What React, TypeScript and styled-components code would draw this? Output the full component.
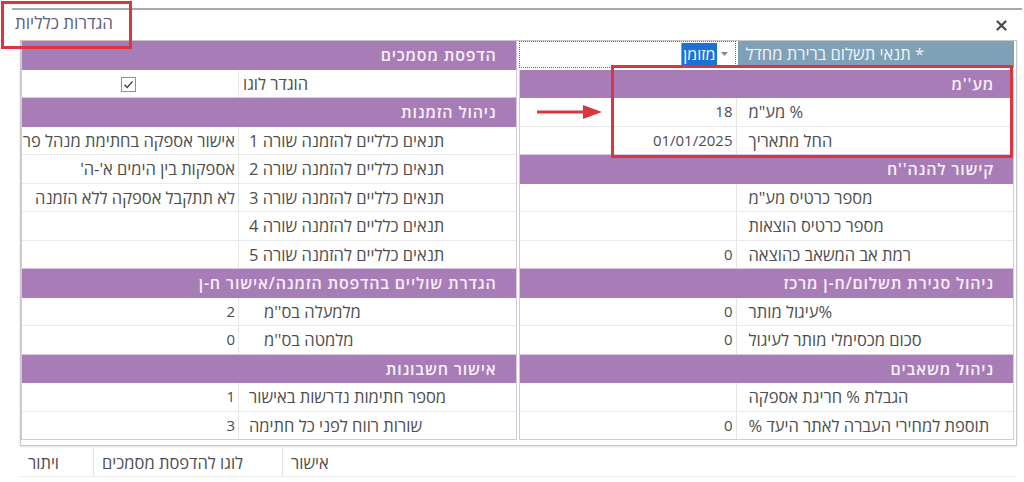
import React from "react";
import styled, { createGlobalStyle } from "styled-components";

const Global = createGlobalStyle`
  html, body { margin: 0; padding: 0; background: #ffffff; }
  body { font-family: "Open Sans", "DejaVu Sans", sans-serif; }
  * { box-sizing: border-box; }
`;

const Page = styled.div`
  position: relative;
  width: 1024px;
  height: 482px;
  overflow: hidden;
`;

const Dialog = styled.div`
  width: 1010px;
  margin: 8px 0 0 12px;
  border-top: 2px solid #a9a9a9;
`;

const TitleBar = styled.div`
  display: flex;
  justify-content: space-between;
  align-items: flex-start;
  height: 30px;
  padding: 0 15px 0 3px;
  direction: ltr;
`;

const Title = styled.div`
  font-size: 17px;
  line-height: 26px;
  color: #615d7b;
  direction: rtl;
`;

const CloseButton = styled.button`
  margin-top: 10px;
  width: 11px;
  height: 11px;
  padding: 0;
  border: 0;
  background: transparent;
  display: flex;
`;

const Panel = styled.div`
  margin-left: 8px;
  width: 997px;
  border: 1px solid #c6c6c6;
  box-shadow: 0 1px 2px rgba(0, 0, 0, 0.12);
  padding: 0 2px 5px 0;
  display: grid;
  grid-template-columns: 1fr 1fr;
  column-gap: 2px;
  direction: rtl;
`;

const Column = styled.div`
  display: flex;
  flex-direction: column;
`;

const Section = styled.div`
  border-left: 1px solid #d9c7e1;
  border-right: 1px solid #d9c7e1;
`;

const SectionHeader = styled.div`
  height: 28.5px;
  background: #a87cb6;
  color: #f7f0f9;
  font-size: 16px;
  font-weight: 600;
  letter-spacing: 0.8px;
  line-height: 28.5px;
  padding-right: 19px;
  white-space: nowrap;
  overflow: hidden;
`;

const Row = styled.div`
  height: 28.5px;
  display: grid;
  grid-template-columns: 1fr 217px;
  border-bottom: 1px solid #e9e9e9;
  &:last-child {
    border-bottom-color: #d9c7e1;
  }
`;

const Label = styled.div<{ $pad: number }>`
  font-size: 16.5px;
  color: #4d4d4d;
  text-align: left;
  padding-left: ${(p) => p.$pad}px;
  line-height: 27px;
  white-space: nowrap;
  overflow: hidden;
`;

const Value = styled.div<{ $num: boolean }>`
  font-size: ${(p) => (p.$num ? 15 : 16.5)}px;
  color: #4d4d4d;
  text-align: right;
  padding-right: 3px;
  line-height: 27px;
  white-space: nowrap;
  overflow: hidden;
  border-right: 1px solid #e6e6e6;
  display: flex;
  align-items: center;
`;

const CheckWrap = styled.div`
  flex: 1;
  display: flex;
  justify-content: center;
  align-items: center;
  padding-top: 2px;
`;

const CheckBox = styled.span`
  width: 15px;
  height: 15px;
  border: 1px solid #8f8f8f;
  background: #fff;
  display: flex;
  align-items: center;
  justify-content: center;
`;

const TopRow = styled.div`
  height: 28.5px;
  display: grid;
  grid-template-columns: 1fr 217px;
  border-bottom: 2px solid #ffffff;
`;

const TopLabel = styled.div`
  background: #7fa1b7;
  color: #f1f5f8;
  font-size: 16.5px;
  text-align: left;
  padding-left: 8px;
  line-height: 26px;
  white-space: nowrap;
  margin-left: 2px;
`;

const Dropdown = styled.div`
  border: 1px dotted #6a6a6a;
  background: #fff;
  display: flex;
  align-items: flex-start;
  padding-right: 2px;
`;

const DropArrow = styled.span`
  width: 16px;
  height: 24px;
  display: flex;
  align-items: center;
  justify-content: center;
`;

const Selected = styled.span`
  background: #1b72d6;
  color: #ffffff;
  font-size: 16px;
  line-height: 22px;
  height: 22px;
  padding: 0 1px;
  border-left: 1px solid #f08a24;
  margin-top: 1px;
`;

const Footer = styled.div`
  margin-left: 8px;
  width: 997px;
  height: 31px;
  padding-top: 2px;
  border-bottom: 1px solid #ececec;
  display: flex;
  justify-content: flex-end;
  direction: rtl;
`;

const FooterButton = styled.button<{ $w: number; $sep: boolean }>`
  width: ${(p) => p.$w}px;
  height: 29px;
  border: 0;
  border-left: ${(p) => (p.$sep ? "1px solid #e3e3e3" : "0")};
  background: transparent;
  font-family: inherit;
  font-size: 16.5px;
  color: #4d4d4d;
  text-align: left;
  padding: 0 0 0 8px;
  direction: rtl;
`;

const Annotation = styled.div<{ $x: number; $y: number; $w: number; $h: number }>`
  position: absolute;
  left: ${(p) => p.$x}px;
  top: ${(p) => p.$y}px;
  width: ${(p) => p.$w}px;
  height: ${(p) => p.$h}px;
  border: 3px solid #d9363d;
  pointer-events: none;
`;

const ArrowMark = styled.svg`
  position: absolute;
  left: 535px;
  top: 104px;
`;

type RowData = { label: string; value?: string; check?: boolean; pad?: number };
type SectionData = { title: string; rows: RowData[] };

const rightSections: SectionData[] = [
  {
    title: "מע''מ",
    rows: [
      { label: "% מע\"מ", value: "18" },
      { label: "החל מתאריך", value: "01/01/2025" },
    ],
  },
  {
    title: "קישור להנה''ח",
    rows: [
      { label: "מספר כרטיס מע\"מ", value: "" },
      { label: "מספר כרטיס הוצאות", value: "" },
      { label: "רמת אב המשאב כהוצאה", value: "0" },
    ],
  },
  {
    title: "ניהול סגירת תשלום/ח-ן מרכז",
    rows: [
      { label: "%עיגול מותר", value: "0" },
      { label: "סכום מכסימלי מותר לעיגול", value: "0" },
    ],
  },
  {
    title: "ניהול משאבים",
    rows: [
      { label: "הגבלת % חריגת אספקה", value: "" },
      { label: "תוספת למחירי העברה לאתר היעד %", value: "0" },
    ],
  },
];

const leftSections: SectionData[] = [
  {
    title: "הדפסת מסמכים",
    rows: [{ label: "הוגדר לוגו", check: true, pad: 4 }],
  },
  {
    title: "ניהול הזמנות",
    rows: [
      { label: "תנאים כלליים להזמנה שורה 1", value: "אישור אספקה בחתימת מנהל פרויקט" },
      { label: "תנאים כלליים להזמנה שורה 2", value: "אספקות בין הימים א'-ה'" },
      { label: "תנאים כלליים להזמנה שורה 3", value: "לא תתקבל אספקה ללא הזמנה" },
      { label: "תנאים כלליים להזמנה שורה 4", value: "" },
      { label: "תנאים כלליים להזמנה שורה 5", value: "" },
    ],
  },
  {
    title: "הגדרת שוליים בהדפסת הזמנה/אישור ח-ן",
    rows: [
      { label: "מלמעלה בס''מ", value: "2", pad: 25 },
      { label: "מלמטה בס''מ", value: "0", pad: 25 },
    ],
  },
  {
    title: "אישור חשבונות",
    rows: [
      { label: "מספר חתימות נדרשות באישור", value: "1" },
      { label: "שורות רווח לפני כל חתימה", value: "3" },
    ],
  },
];

const isNumeric = (v: string) => /^[0-9/.\s]*$/.test(v);

const Check = () => (
  <CheckBox>
    <svg width="11" height="11" viewBox="0 0 11 11">
      <path d="M1.5 5.8 L4.2 8.4 L9.6 2.4" fill="none" stroke="#3c3c3c" strokeWidth="1.4" />
    </svg>
  </CheckBox>
);

const SectionBlock = ({ data, pad }: { data: SectionData; pad: number }) => (
  <Section>
    <SectionHeader>{data.title}</SectionHeader>
    {data.rows.map((r, i) => (
      <Row key={i}>
        <Label $pad={r.pad ?? pad}>{r.label}</Label>
        <Value $num={isNumeric(r.value ?? "")}>
          {r.check ? (
            <CheckWrap>
              <Check />
            </CheckWrap>
          ) : (
            r.value
          )}
        </Value>
      </Row>
    ))}
  </Section>
);

export default function App() {
  return (
    <Page>
      <Global />
      <Dialog>
        <TitleBar>
          <Title>הגדרות כלליות</Title>
          <CloseButton aria-label="close">
            <svg width="11" height="11" viewBox="0 0 11 11">
              <path d="M1.5 1.5 L9.5 9.5 M9.5 1.5 L1.5 9.5" stroke="#4a4a4a" strokeWidth="2.2" strokeLinecap="round" />
            </svg>
          </CloseButton>
        </TitleBar>
        <Panel>
          <Column>
            <TopRow>
              <TopLabel>* תנאי תשלום ברירת מחדל</TopLabel>
              <Dropdown>
                <DropArrow>
                  <svg width="7" height="4" viewBox="0 0 7 4">
                    <path d="M0 0 L7 0 L3.5 4 Z" fill="#8a8a8a" />
                  </svg>
                </DropArrow>
                <Selected>מזומן</Selected>
              </Dropdown>
            </TopRow>
            {rightSections.map((s, i) => (
              <SectionBlock key={i} data={s} pad={12} />
            ))}
          </Column>
          <Column>
            {leftSections.map((s, i) => (
              <SectionBlock key={i} data={s} pad={10} />
            ))}
          </Column>
        </Panel>
        <Footer>
          <FooterButton $w={100} $sep={true}>אישור</FooterButton>
          <FooterButton $w={189} $sep={true}>לוגו להדפסת מסמכים</FooterButton>
          <FooterButton $w={73} $sep={false}>ויתור</FooterButton>
        </Footer>
      </Dialog>
      <Annotation $x={1} $y={1} $w={131} $h={48} />
      <Annotation $x={611} $y={65} $w={402} $h={93} />
      <ArrowMark width="70" height="16" viewBox="0 0 70 16">
        <line x1="2" y1="8" x2="52" y2="8" stroke="#d9363d" strokeWidth="3" />
        <polygon points="48,1 67,8 48,15" fill="#d9363d" />
      </ArrowMark>
    </Page>
  );
}
